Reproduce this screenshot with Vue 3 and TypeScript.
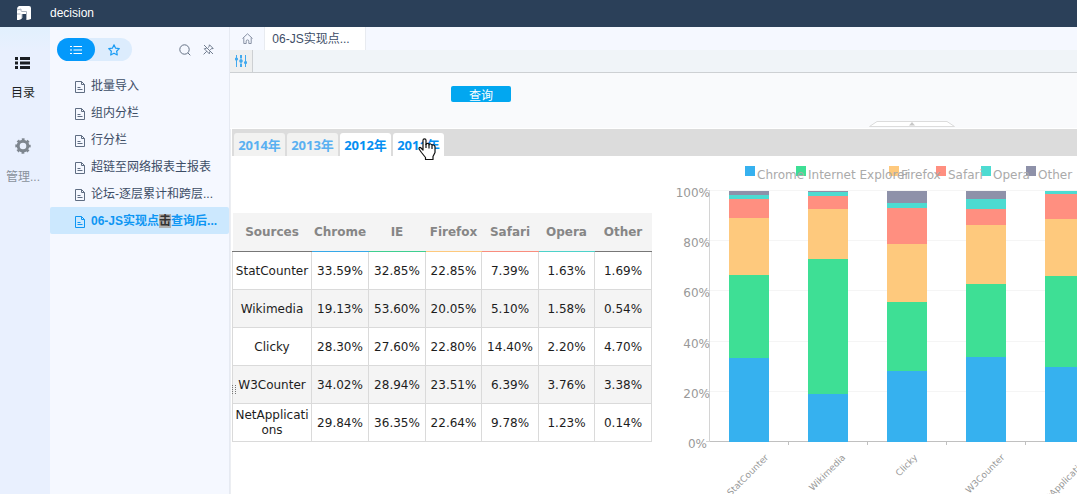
<script setup lang="ts">
interface Series {
  name: string
  color: string
  legendX: number
}
interface Source {
  name: string
  values: number[]
  labelSpan: number
}

const menu: string[] = ['批量导入', '组内分栏', '行分栏', '超链至网络报表主报表', '论坛-逐层累计和跨层...']

const years = [
  { label: '2014年', active: false },
  { label: '2013年', active: false },
  { label: '2012年', active: true },
  { label: '2011年', active: true },
]

const columns = [
  { label: 'Sources', key: 'sources' },
  { label: 'Chrome', key: 'chrome' },
  { label: 'IE', key: 'ie' },
  { label: 'Firefox', key: 'firefox' },
  { label: 'Safari', key: 'safari' },
  { label: 'Opera', key: 'opera' },
  { label: 'Other', key: 'other' },
]

const series: Series[] = [
  { name: 'Chrome', color: '#36b1ef', legendX: 93 },
  { name: 'Internet Explorer', color: '#3edf95', legendX: 144 },
  { name: 'Firefox', color: '#fec97d', legendX: 237 },
  { name: 'Safari', color: '#ff8f80', legendX: 284 },
  { name: 'Opera', color: '#4ddbd1', legendX: 329 },
  { name: 'Other', color: '#8e91a9', legendX: 374 },
]

// labelSpan is the horizontal extent of the slanted category label, used to centre it under its bar
const sources: Source[] = [
  { name: 'StatCounter', values: [33.59, 32.85, 22.85, 7.39, 1.63, 1.69], labelSpan: 42 },
  { name: 'Wikimedia', values: [19.13, 53.6, 20.05, 5.1, 1.58, 0.54], labelSpan: 38 },
  { name: 'Clicky', values: [28.3, 27.6, 22.8, 14.4, 2.2, 4.7], labelSpan: 24 },
  { name: 'W3Counter', values: [34.02, 28.94, 23.51, 6.39, 3.76, 3.38], labelSpan: 40 },
  { name: 'NetApplications', values: [29.84, 36.35, 22.64, 9.78, 1.23, 0.14], labelSpan: 56 },
]

const plot = { left: 58, top: 35, height: 251, band: 79, bar: 40 }
const baseY = plot.top + plot.height
const ticks = [0, 20, 40, 60, 80, 100].map((v) => ({
  label: `${v}%`,
  y: Math.round(baseY - (v / 100) * plot.height),
}))

const bars = sources.map((s, i) => {
  const total = s.values.reduce((a, b) => a + b, 0)
  const x = plot.left + i * plot.band + 19
  let sum = 0
  const parts = s.values.map((v, k) => {
    const bottom = Math.round(baseY - (sum / total) * plot.height)
    sum += v
    const top = Math.round(baseY - (sum / total) * plot.height)
    return { y: top, h: bottom - top, color: series[k].color }
  })
  return {
    name: s.name,
    x,
    parts,
    tickX: plot.left + (i + 1) * plot.band,
    labelX: x + (plot.bar + s.labelSpan) / 2 - 1,
  }
})
</script>

<template>
  <div class="app">
    <header class="top">
      <svg class="logo" width="16" height="16" viewBox="0 0 16 16">
        <path d="M3 1h10q2 0 2 2v11q-2 1-5 1V9H6v4q-1 2-5 2V4q0-2 2-3z" fill="#fff" />
        <path d="M1 5l4-1v1.500q0 1 1 1h4.500V15M4.500 9H1M6 9v4" stroke="#a9b2bd" fill="none" />
      </svg>
      <span>decision</span>
    </header>

    <div class="body">
      <nav class="rail">
        <a href="#catalog" class="rail-item current">
          <svg width="16" height="14" viewBox="0 0 16 14" fill="#1b1e22">
            <path d="M0 1h3v3H0zM0 5.500h3v3H0zM0 10h3v3H0zM5 1h10v3H5zM5 5.500h10v3H5zM5 10h10v3H5z" />
          </svg>
          <span>目录</span>
        </a>
        <a href="#manage" class="rail-item">
          <svg width="16" height="16" viewBox="0 0 16 16">
            <circle cx="8" cy="8" r="4.800" fill="none" stroke="#7e868f" stroke-width="3" />
            <circle cx="8" cy="8" r="6.700" fill="none" stroke="#7e868f" stroke-width="2" stroke-dasharray="2.800 2.462" stroke-dashoffset="1.400" />
          </svg>
          <span>管理...</span>
        </a>
      </nav>

      <aside class="side">
        <div class="side-tools">
          <div class="switch">
            <button type="button" class="on" aria-label="目录">
              <svg width="12" height="10" viewBox="0 0 12 10" stroke="#fff" stroke-width="1.200">
                <path d="M0 1.500h2M0 5h2M0 8.500h2M3.500 1.500H12M3.500 5H12M3.500 8.500H12" />
              </svg>
            </button>
            <button type="button" aria-label="收藏">
              <svg width="12" height="12" viewBox="0 0 12 12">
                <path d="M6 .8l1.600 3.400 3.700.4-2.700 2.600.7 3.800L6 9.200l-3.300 1.800.7-3.800L.7 4.600l3.700-.4z" fill="none" stroke="#1a9cf4" stroke-width="1.200" stroke-linejoin="round" />
              </svg>
            </button>
          </div>
          <button type="button" class="icon-btn push" aria-label="搜索">
            <svg width="12" height="12" viewBox="0 0 12 12" fill="none" stroke="#647184">
              <circle cx="5.500" cy="5.500" r="4.700" /><path d="M9 9l2.300 2.300" />
            </svg>
          </button>
          <button type="button" class="icon-btn" aria-label="取消固定">
            <svg width="11" height="11" viewBox="0 0 11 11" fill="none" stroke="#647184" stroke-width=".9">
              <path d="M1 1l9 9M6.500.8l3.700 3.700-2 .3-1 1M6.500.8l-.5 2-.8.8M3.600 4.200l-2.300.6 5 5 .5-2.300M3.800 7.200L.6 10.400" />
            </svg>
          </button>
        </div>
        <a v-for="m in menu" :key="m" href="#report" class="node">
          <svg class="doc" width="10" height="12" viewBox="0 0 10 12" fill="none" stroke="currentColor">
            <path d="M.5.5h6l3 3v8h-9zM6.500.5v3h3M2.500 6.500h3M2.500 8.500h5" />
          </svg>
          <span>{{ m }}</span>
        </a>
        <a href="#report" class="node selected">
          <svg class="doc" width="10" height="12" viewBox="0 0 10 12" fill="none" stroke="currentColor">
            <path d="M.5.5h6l3 3v8h-9zM6.500.5v3h3M2.500 6.500h3M2.500 8.500h5" />
          </svg>
          <span>06-JS实现点<mark>击</mark>查询后...</span>
        </a>
      </aside>

      <main class="main">
        <div class="page-tabs">
          <button type="button" class="home" aria-label="首页">
            <svg width="11" height="11" viewBox="0 0 11 11" fill="none" stroke="#8892a5">
              <path d="M.5 5.500L5.500.8l5 4.700M1.800 4.600v5.900h2.400V8.200a1.300 1.300 0 0 1 2.600 0v2.300h2.400V4.600" />
            </svg>
          </button>
          <button type="button" class="page-tab">06-JS实现点...</button>
        </div>

        <div class="toolbar">
          <button type="button" class="filter" aria-label="参数">
            <svg width="12" height="12" viewBox="0 0 12 12" fill="#41a9ee">
              <path d="M1 0h1v12H1zM5.500 0h1v12h-1zM10 0h1v12h-1z" />
              <circle cx="1.500" cy="4" r="1.600" /><circle cx="6" cy="6" r="1.800" /><circle cx="10.500" cy="7.500" r="1.600" />
              <path d="M5 0h2v3H5zM5 9h2v3H5z" />
            </svg>
          </button>
        </div>

        <section class="params">
          <button type="button" class="query">查询</button>
          <button type="button" class="collapse" aria-label="收起">
            <svg width="86" height="7" viewBox="0 0 86 7">
              <path d="M.5 5.500L8 .5H78L85.500 5.500z" fill="#fff" stroke="#dcdcdc" />
              <path d="M40 4.500L43 1L46 4.500z" fill="#c8c8c8" />
            </svg>
          </button>
        </section>

        <section class="report">
          <div class="year-tabs">
            <button v-for="y in years" :key="y.label" type="button" :class="{ active: y.active }">{{ y.label }}</button>
            <svg class="pointer" width="20" height="23" viewBox="0 0 20 23">
              <path d="M5 2.200Q5 .8 6.500.8T8 2.200V6.500Q8.300 5.300 9.600 5.300T11 6.800Q11.300 5.800 12.600 6T14 7.500Q14.500 6.600 15.600 7T17 8.700V14.500L15 18.500V21.500H7.500V19.500L3.500 14.500L1 11Q.8 9.200 2.500 9.500L5 12z" fill="#fff" stroke="#111" stroke-width="1.200" stroke-linejoin="round" />
              <path d="M8 6v4M11 7v3.500M14 8v3" stroke="#111" stroke-width="1.200" />
            </svg>
          </div>
          <div class="sheet">
            <table>
              <colgroup><col v-for="c in columns" :key="c.key" :class="'w-' + c.key" /></colgroup>
              <thead>
                <tr><th v-for="c in columns" :key="c.key" :class="c.key" scope="col">{{ c.label }}</th></tr>
              </thead>
              <tbody>
                <tr v-for="s in sources" :key="s.name">
                  <td>{{ s.name }}</td>
                  <td v-for="(v, k) in s.values" :key="k">{{ v.toFixed(2) }}%</td>
                </tr>
              </tbody>
            </table>
            <svg class="grip" width="4" height="9" viewBox="0 0 4 9" stroke="#777" stroke-dasharray="1 1">
              <path d="M.5 0v9M3.500 0v9" />
            </svg>

            <div class="chart">
              <svg width="480" height="338" viewBox="0 0 480 338">
                <g shape-rendering="crispEdges">
                  <path v-for="t in ticks" :key="'g' + t.label" :d="`M${plot.left} ${t.y - 1}.5H480`" stroke="#f5f5f5" />
                  <rect v-for="s in series" :key="'k' + s.name" :x="s.legendX" y="10" width="10" height="10" :fill="s.color" />
                  <path :d="`M57.500 ${plot.top}V${baseY}`" stroke="#d4d4d4" />
                  <path v-for="t in ticks" :key="'t' + t.label" :d="`M54 ${t.y - 1}.5h4`" stroke="#d4d4d4" />
                  <path :d="`M58 ${baseY - 1}.5H480`" stroke="#c0c0c0" />
                  <g v-for="b in bars" :key="b.name">
                    <rect v-for="(p, k) in b.parts" :key="k" :x="b.x" :y="p.y" :width="plot.bar" :height="p.h" :fill="p.color" />
                    <path :d="`M${b.tickX - 1}.5 ${baseY}v3`" stroke="#c0c0c0" />
                  </g>
                </g>
                <text v-for="t in ticks" :key="t.label" class="axis" :x="t.label === '0%' ? 55 : 58" :y="t.y + 6" text-anchor="end">{{ t.label }}</text>
                <text v-for="s in series" :key="s.name" class="legend" :x="s.legendX + 12" y="23">{{ s.name }}</text>
                <text v-for="b in bars" :key="b.name" class="category" text-anchor="end" :transform="`translate(${b.labelX} ${baseY + 16}) rotate(-45)`">{{ b.name }}</text>
              </svg>
            </div>
          </div>
        </section>
      </main>
    </div>
  </div>
</template>

<style>
body {
  margin: 0;
}
</style>

<style scoped>
.app {
  display: flex;
  flex-direction: column;
  height: 100vh;
  overflow: hidden;
  font: 12px/16px "Liberation Sans", "Noto Sans CJK SC", sans-serif;
  color: #3d4d66;
  background: #fff;
}
button {
  display: flex;
  align-items: center;
  justify-content: center;
  margin: 0;
  padding: 0;
  border: 0;
  background: none;
  font: inherit;
  color: inherit;
}
a {
  color: inherit;
  text-decoration: none;
}
svg {
  display: block;
  flex: none;
}
.top {
  display: flex;
  align-items: center;
  gap: 18px;
  flex: none;
  height: 27px;
  padding: 0 16px 2px;
  box-sizing: border-box;
  background: #2b4059;
  color: #fff;
}
.body {
  display: flex;
  flex: 1;
  min-height: 0;
}
.rail {
  display: flex;
  flex-direction: column;
  flex: none;
  gap: 37px;
  width: 50px;
  padding-top: 29px;
  box-sizing: border-box;
  background: linear-gradient(#e1f0fd, #e9f0fe 24px);
}
.rail-item {
  display: flex;
  flex-direction: column;
  align-items: center;
  gap: 15px;
  padding-right: 4px;
  color: #8a929c;
  white-space: nowrap;
}
.rail-item.current {
  color: #1b1e22;
}
.side {
  flex: none;
  width: 180px;
  box-sizing: border-box;
  border-right: 1px solid #e6eaf2;
  background: #f5f8ff;
}
.side-tools {
  display: flex;
  align-items: center;
  gap: 12px;
  padding: 11px 15px 11px 7px;
}
.switch {
  display: flex;
  border-radius: 12px;
  background: #dcecfd;
}
.switch button {
  width: 37px;
  height: 23px;
  border-radius: 12px;
}
.switch .on {
  width: 38px;
  background: #0499fb;
}
.push {
  margin-left: auto;
}
.node {
  display: flex;
  align-items: center;
  gap: 6px;
  height: 27px;
  padding-left: 25px;
  white-space: nowrap;
}
.doc {
  margin-top: 2px;
  color: #5f6d82;
}
.node.selected {
  background: #cce8fe;
  border-radius: 2px;
  color: #0e96f3;
  font-weight: bold;
}
.selected .doc {
  color: #0e96f3;
}
mark {
  background: #b0b0b0;
  color: #333;
}
.main {
  display: flex;
  flex-direction: column;
  flex: 1;
  min-width: 0;
}
.page-tabs {
  display: flex;
  flex: none;
  height: 23px;
  background: #f5f8ff;
}
.home {
  width: 34px;
}
.page-tab {
  width: 102px;
  padding-right: 8px;
  box-sizing: border-box;
  border: solid #e8ebf0;
  border-width: 0 1px;
  background: #fff;
}
.toolbar {
  display: flex;
  flex: none;
  height: 22px;
  border-bottom: 1px solid #cdd0d3;
  background: #f0f4f8;
}
.filter {
  width: 23px;
  border-right: 1px solid #cdd0d3;
  background: #eeefef;
}
.params {
  position: relative;
  flex: none;
  height: 55px;
  padding: 13px 0 0 221px;
  box-sizing: border-box;
  background: #f9fafc;
}
.query {
  width: 60px;
  height: 16px;
  padding-top: 4px;
  overflow: hidden;
  border-radius: 2px;
  background: #02a7f0;
  color: #fff;
}
.collapse {
  position: absolute;
  left: 639px;
  bottom: 0;
}
.report {
  flex: 1;
  min-height: 0;
  margin-top: 1px;
  padding-left: 1px;
  border-left: 1px solid #eceef2;
  background: #fff;
}
.year-tabs {
  position: relative;
  display: flex;
  align-items: flex-end;
  gap: 2px;
  height: 27px;
  padding-left: 2px;
  background: #dcdcdc;
  font: bold 13px/16px "Noto Sans", "Noto Sans CJK SC", sans-serif;
}
.year-tabs button {
  width: 51px;
  height: 23px;
  border-radius: 3px 3px 0 0;
  background: #f2f2f1;
  color: #5ab0f1;
  white-space: nowrap;
}
.year-tabs .active {
  background: #fff;
  color: #058ff2;
}
.pointer {
  position: absolute;
  left: 186px;
  top: 9px;
}
.sheet {
  position: relative;
  display: flex;
  align-items: flex-start;
}
table {
  flex: none;
  width: 420px;
  margin-top: 57px;
  border-collapse: collapse;
  table-layout: fixed;
  font: 12px/15px "DejaVu Sans", sans-serif;
  color: #1d1d1d;
  text-align: center;
}
.w-sources {
  width: 79px;
}
.w-firefox,
.w-opera {
  width: 56px;
}
th,
td {
  padding: 0;
  overflow-wrap: anywhere;
}
td {
  height: 37px;
  border: 1px solid #dadada;
}
tbody tr:nth-child(even) {
  background: #f4f4f4;
}
th {
  height: 38px;
  background: #f4f4f4;
  border-bottom: 1px solid #777;
  color: #868686;
}
tbody td {
  padding-top: 1px;
  height: 36px;
}
td:first-child {
  padding-left: 1px;
  padding-right: 1px;
}
th.chrome {
  border-bottom-color: #36a8e8;
}
th.ie {
  border-bottom-color: #3fcf90;
}
th.firefox {
  border-bottom-color: #fec97d;
}
th.safari {
  border-bottom-color: #f98d7e;
}
th.opera {
  border-bottom-color: #4dd2ca;
}
.grip {
  position: absolute;
  left: 0;
  top: 229px;
}
.chart {
  flex: 1;
  min-width: 0;
  overflow: hidden;
}
.axis,
.legend {
  font: 12px "DejaVu Sans", sans-serif;
  fill: #999;
}
.legend {
  fill: #aaa;
}
.category {
  font: 9px "DejaVu Sans", sans-serif;
  fill: #999;
}
</style>
